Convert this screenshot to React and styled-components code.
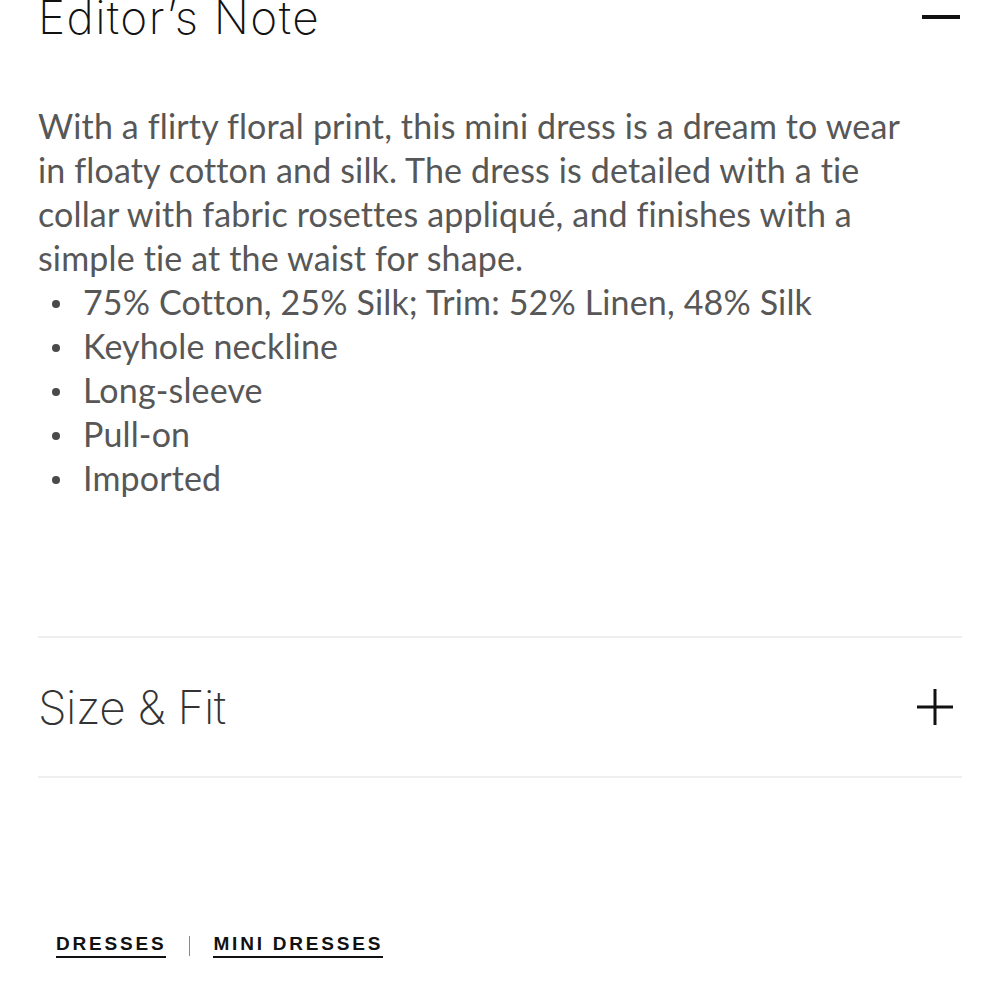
import React from "react";
import styled, { createGlobalStyle } from "styled-components";

const Global = createGlobalStyle`
  html, body {
    margin: 0;
    background: #fff;
  }
  body {
    font-family: "Lato", "Liberation Sans", sans-serif;
  }
`;

const Page = styled.div`
  width: 1000px;
  height: 1000px;
  overflow: hidden;
  padding: 0 38px;
  box-sizing: border-box;
`;

const SectionHead = styled.div`
  display: flex;
  align-items: center;
  justify-content: space-between;
  height: ${p => p.height || 138}px;
  margin-top: ${p => p.offset || 0}px;
  border-bottom: ${p => (p.ruled ? "2px solid #efefef" : "none")};
`;

const Title = styled.h2`
  margin: 0;
  font-family: "Inter", "Liberation Sans", sans-serif;
  font-weight: 200;
  font-size: 46px;
  color: ${p => p.tone || "#111"};
  letter-spacing: ${p => p.spacing ?? -0.5}px;
`;

const Toggle = styled.span`
  position: relative;
  width: ${p => (p.open ? 38 : 36)}px;
  height: 36px;
  margin-right: ${p => (p.open ? 2 : 9)}px;
  &::before,
  &::after {
    content: "";
    position: absolute;
    background: #111;
  }
  &::before {
    left: 0;
    right: 0;
    top: 50%;
    height: ${p => (p.open ? 4 : 3)}px;
    transform: translateY(-50%);
  }
  &::after {
    display: ${p => (p.open ? "none" : "block")};
    top: 0;
    bottom: 0;
    left: 50%;
    width: 3px;
    transform: translateX(-50%);
  }
`;

const Body = styled.div`
  color: #575757;
  font-size: 34px;
  line-height: 44px;
  letter-spacing: 0.15px;
  padding: 42px 50px 136px 0;
  border-bottom: 2px solid #efefef;
`;

const Para = styled.p`
  margin: 0;
`;

const List = styled.ul`
  margin: 0;
  padding: 0;
  list-style: none;
`;

const Item = styled.li`
  display: flex;
  align-items: center;
  &::before {
    content: "";
    flex: 0 0 8px;
    width: 8px;
    height: 8px;
    border-radius: 50%;
    background: #4a4a4a;
    margin: 4px 23px 0 14px;
  }
`;

const Crumbs = styled.nav`
  display: flex;
  align-items: center;
  gap: 23px;
  margin-top: 155px;
  padding-left: 18px;
`;

const Crumb = styled.a`
  font-family: "Liberation Sans", sans-serif;
  font-weight: 700;
  font-size: 19px;
  letter-spacing: 2.8px;
  color: #111;
  text-decoration: none;
  border-bottom: 2px solid #111;
  padding-bottom: 1px;
`;

const Sep = styled.span`
  width: 1px;
  height: 20px;
  background: #888;
`;

const features = [
  "75% Cotton, 25% Silk; Trim: 52% Linen, 48% Silk",
  "Keyhole neckline",
  "Long-sleeve",
  "Pull-on",
  "Imported",
];

export default function App() {
  return (
    <>
      <Global />
      <Page>
        <SectionHead height={90} offset={-28}>
          <Title spacing={1.4}>Editor’s Note</Title>
          <Toggle open />
        </SectionHead>
        <Body>
          <Para>
            With a flirty floral print, this mini dress is a dream to wear in
            floaty cotton and silk. The dress is detailed with a tie collar with
            fabric rosettes appliqué, and finishes with a simple tie at the
            waist for shape.
          </Para>
          <List>
            {features.map(f => (
              <Item key={f}>{f}</Item>
            ))}
          </List>
        </Body>
        <SectionHead ruled>
          <Title tone="#333">Size &amp; Fit</Title>
          <Toggle />
        </SectionHead>
        <Crumbs>
          <Crumb href="#">DRESSES</Crumb>
          <Sep />
          <Crumb href="#">MINI DRESSES</Crumb>
        </Crumbs>
      </Page>
    </>
  );
}
